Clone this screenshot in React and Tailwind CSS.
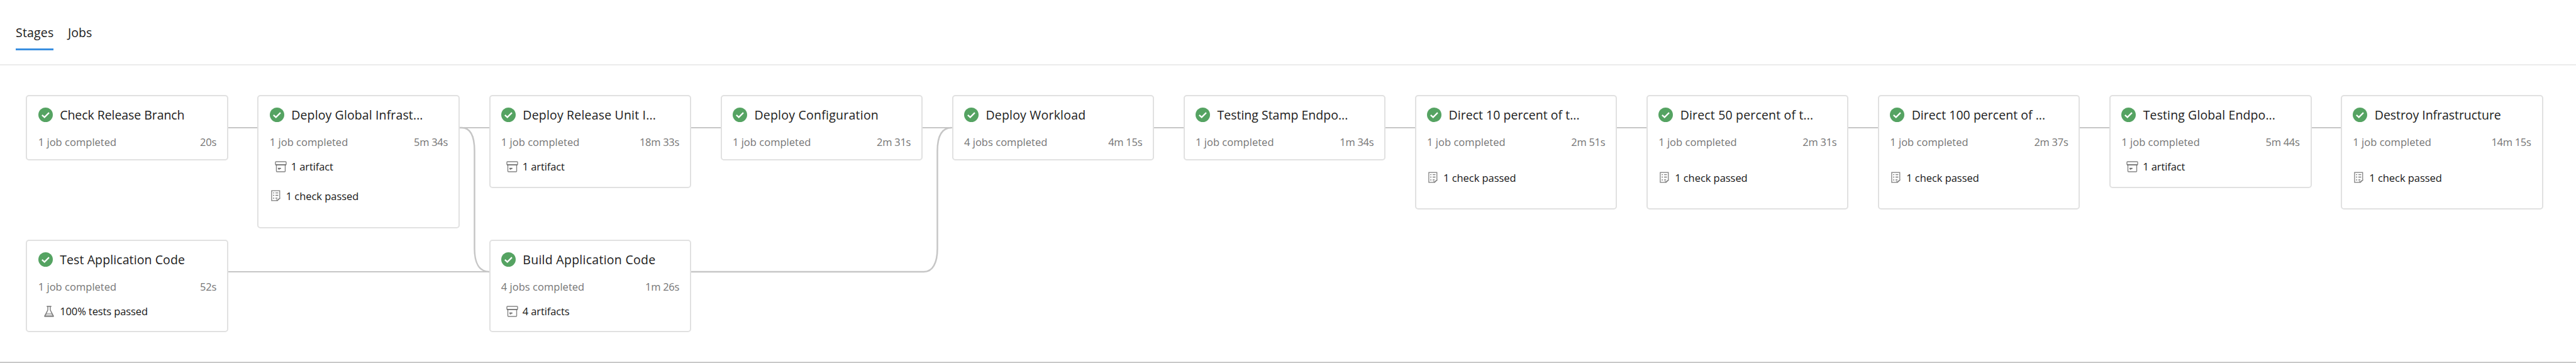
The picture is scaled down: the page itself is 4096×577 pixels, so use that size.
const STAGES = [
  { name: "Check Release Branch", tracking: "tracking-[-0.06px]", jobs: "1 job completed", time: "20s", size: "h-[104px]", cell: "col-start-1 row-start-1" },
  { name: "Deploy Global Infrast...", tracking: "tracking-[0.12px]", jobs: "1 job completed", time: "5m 34s", artifacts: "1 artifact", check: "1 check passed", size: "h-[212px]", cell: "col-start-2 row-start-1" },
  { name: "Deploy Release Unit I...", tracking: "tracking-[0.18px]", jobs: "1 job completed", time: "18m 33s", artifacts: "1 artifact", size: "h-[147.5px]", cell: "col-start-3 row-start-1" },
  { name: "Deploy Configuration", tracking: "tracking-[0.24px]", jobs: "1 job completed", time: "2m 31s", size: "h-[104px]", cell: "col-start-4 row-start-1" },
  { name: "Deploy Workload", tracking: "tracking-[0.2px]", jobs: "4 jobs completed", time: "4m 15s", size: "h-[104px]", cell: "col-start-5 row-start-1" },
  { name: "Testing Stamp Endpo...", tracking: "tracking-[0px]", jobs: "1 job completed", time: "1m 34s", size: "h-[104px]", cell: "col-start-6 row-start-1" },
  { name: "Direct 10 percent of t...", tracking: "tracking-[0.02px]", jobs: "1 job completed", time: "2m 51s", check: "1 check passed", size: "h-[181.5px]", cell: "col-start-7 row-start-1" },
  { name: "Direct 50 percent of t...", tracking: "tracking-[0.17px]", jobs: "1 job completed", time: "2m 31s", check: "1 check passed", size: "h-[181.5px]", cell: "col-start-8 row-start-1" },
  { name: "Direct 100 percent of ...", tracking: "tracking-[0.03px]", jobs: "1 job completed", time: "2m 37s", check: "1 check passed", size: "h-[181.5px]", cell: "col-start-9 row-start-1" },
  { name: "Testing Global Endpo...", tracking: "tracking-[0.11px]", jobs: "1 job completed", time: "5m 44s", artifacts: "1 artifact", size: "h-[147.5px]", cell: "col-start-10 row-start-1" },
  { name: "Destroy Infrastructure", tracking: "tracking-[-0.05px]", jobs: "1 job completed", time: "14m 15s", check: "1 check passed", size: "h-[181.5px]", cell: "col-start-11 row-start-1" },
  { name: "Test Application Code", tracking: "tracking-[0.1px]", jobs: "1 job completed", time: "52s", tests: "100% tests passed", size: "h-[147px]", cell: "col-start-1 row-start-2" },
  { name: "Build Application Code", tracking: "tracking-[0.27px]", jobs: "4 jobs completed", time: "1m 26s", artifacts: "4 artifacts", size: "h-[147px]", cell: "col-start-3 row-start-2" },
];

function SuccessIcon() {
  return (
    <svg viewBox="0 0 26 26" className="mb-px size-[23px] shrink-0">
      <circle cx="13" cy="13" r="13" fill="#55a362" />
      <path d="M6.6 13.4 11 17.4 19.2 9.2" fill="none" stroke="#fff" strokeWidth="2.5" />
    </svg>
  );
}

function ArtifactIcon() {
  return (
    <svg viewBox="0 0 20 19" className="mb-px h-[18px] w-[19px] shrink-0" fill="none" stroke="#858585" strokeWidth="1.5">
      <path d="M2.6 6.5V17a1 1 0 0 0 1 1h12.8a1 1 0 0 0 1-1V6.5" />
      <path d="M1 6.2V2a1 1 0 0 1 1-1h16a1 1 0 0 1 1 1v4.2" />
      <path d="M1 6.3h18" stroke="#606060" strokeWidth="1.7" />
      <path d="M5.2 12.3h5" stroke="#505050" strokeWidth="1.6" />
      <path d="M6 14h2" />
    </svg>
  );
}

function ChecklistIcon() {
  return (
    <svg viewBox="0 0 17 20" className="mb-[2px] h-[18px] w-[15px] shrink-0" fill="none" stroke="#7c7c7c" strokeWidth="1.4">
      <path d="M15.6 13.5V1H1v18h9.5l5.6-4.8" />
      <path d="M3.6 5h2.2M8 5h5M3.6 9.5h2.2M8 9.5h5M3.6 14.5h2.2M8 14.5h3.5" strokeWidth="1.6" />
      <path d="M9.5 17l2 2 5-5" />
    </svg>
  );
}

function FlaskIcon() {
  return (
    <svg viewBox="0 0 18 20" className="mb-px h-[18px] w-[16px] shrink-0" fill="none" stroke="#757575" strokeWidth="1.5">
      <path d="M4.6 13.5h8.8l2 4.3H2.6z" fill="#d4d4d4" stroke="#a0a0a0" strokeWidth="1" />
      <path d="M4.8 1h8.4M6.8 1v6.5L1.2 18.2a.5.5 0 0 0 .5.8h14.6a.5.5 0 0 0 .5-.8L11.2 7.5V1" />
    </svg>
  );
}

function StageCard({ stage }) {
  return (
    <article className={`relative flex w-[321.6px] flex-col rounded-[5px] border-2 border-[#e1e1e1] bg-white pt-[18px] pr-[17px] pl-[17.3px] text-[16.5px] leading-[20px] whitespace-nowrap ${stage.size} ${stage.cell}`}>
      <div className="flex h-6 items-center gap-[11.5px]">
        <SuccessIcon />
        <h3 className={`text-[19.5px] leading-[24px] text-[#202020] ${stage.tracking}`}>{stage.name}</h3>
      </div>
      <div className="mt-[21px] flex justify-between text-[#757575]">
        <span className="tracking-[0.03px]">{stage.jobs}</span>
        <span className="tracking-[-0.28px]">{stage.time}</span>
      </div>
      {stage.artifacts && (
        <div className="mt-[19px] flex items-center gap-[7px] pl-[8px]">
          <ArtifactIcon />
          <span className="tracking-[-0.12px] text-[#161616]">{stage.artifacts}</span>
        </div>
      )}
      {stage.tests && (
        <div className="mt-[19px] flex items-center gap-[9.5px] pl-[9px]">
          <FlaskIcon />
          <span className="tracking-[-0.11px] text-[#161616]">{stage.tests}</span>
        </div>
      )}
      {stage.check && (
        <div className={`flex items-center gap-[9px] pl-[2px] ${stage.artifacts ? "mt-[27px]" : "mt-[37px]"}`}>
          <ChecklistIcon />
          <span className="tracking-[-0.05px] text-[#161616]">{stage.check}</span>
        </div>
      )}
    </article>
  );
}

function Connectors() {
  return (
    <svg viewBox="0 0 4096 473" className="absolute inset-0 h-[473px] w-[4096px]" fill="none" stroke="#c6c6c6" strokeWidth="2.2">
      <path d="M360 99H3730" />
      <path d="M360 328H780" />
      <path d="M731 99H734C748 99 754.5 112 754.5 136V291C754.5 314 762 328 778 328" strokeWidth="2.5" />
      <path d="M1095 328H1469C1483 328 1490.5 314 1490.5 291V136C1490.5 112 1497 99 1513 99" strokeWidth="2.5" />
    </svg>
  );
}

export default function App() {
  return (
    <div className="flex h-[577px] w-[4096px] flex-col overflow-hidden border-b-2 border-[#c8c8c8] bg-white font-['Open_Sans','Noto_Sans',sans-serif]">
      <nav className="flex h-[104px] shrink-0 items-start gap-[23px] border-b-2 border-[#ebebeb] pt-[39.5px] pl-[25px] text-[19.5px] leading-[24px] text-[#202020]">
        <span className="w-[60px] border-b-[3px] border-[#3a8fe0] pb-[13px] tracking-[0.2px]">Stages</span>
        <span>Jobs</span>
      </nav>
      <main className="relative grow">
        <Connectors />
        <div className="grid grid-cols-[repeat(11,321.6px)] grid-rows-[212px_147px] items-start gap-x-[46.47px] gap-y-[18px] pt-[47px] pl-[41.4px]">
          {STAGES.map((stage) => (
            <StageCard key={stage.name} stage={stage} />
          ))}
        </div>
      </main>
    </div>
  );
}
